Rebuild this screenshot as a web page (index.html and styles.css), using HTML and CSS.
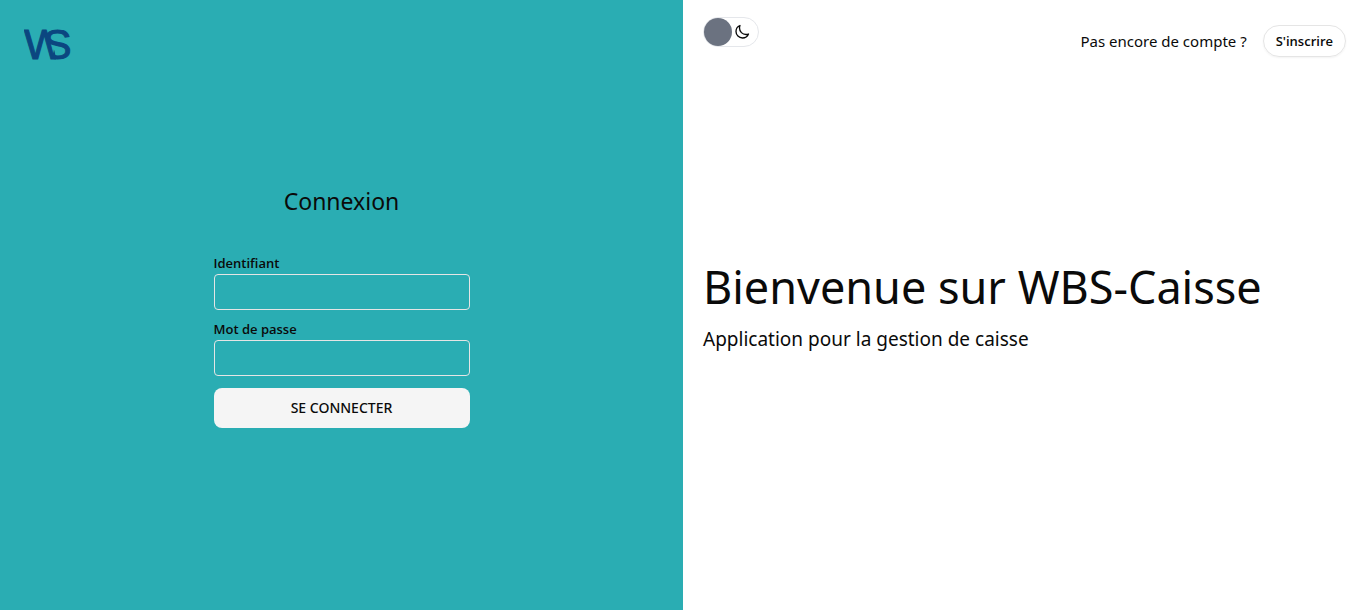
FILE: index.html
```html
<!DOCTYPE html>
<html lang="fr">
<head>
<meta charset="utf-8">
<meta name="viewport" content="width=device-width, initial-scale=1">
<title>WBS-Caisse</title>
<link rel="stylesheet" href="styles.css">
</head>
<body>
<main class="page">
  <section class="login">
    <a class="logo" href="#" aria-label="Accueil">
      <svg width="50" height="34" viewBox="0 0 50 34" aria-hidden="true">
        <clipPath id="first-strokes"><path d="M0 0H24L33 34H0Z"/></clipPath>
        <clipPath id="right-part"><path d="M20 0H50V34H30L24 14Z"/></clipPath>
        <text class="logo-letter" x="0" y="32" clip-path="url(#first-strokes)">W</text>
        <text class="logo-letter" x="19" y="32" clip-path="url(#right-part)">S</text>
      </svg>
    </a>
    <form class="form">
      <h2 class="form-title">Connexion</h2>
      <div class="field">
        <label class="label" for="user">Identifiant</label>
        <input class="input" id="user" type="text">
      </div>
      <div class="field">
        <label class="label" for="password">Mot de passe</label>
        <input class="input" id="password" type="password">
      </div>
      <button class="submit" type="submit">SE CONNECTER</button>
    </form>
  </section>
  <section class="welcome">
    <header class="topbar">
      <button class="theme" type="button" aria-label="Mode sombre">
        <span class="theme-knob"></span>
        <svg class="theme-icon" width="16" height="16" viewBox="0 0 24 24" fill="none" stroke="currentColor" stroke-width="2" stroke-linecap="round" stroke-linejoin="round" aria-hidden="true"><path d="M21.75 15A9.72 9.72 0 0 1 18 15.75C12.6 15.75 8.25 11.4 8.25 6c0-1.33.27-2.6.75-3.75A9.75 9.75 0 0 0 3 11.25C3 16.63 7.37 21 12.75 21a9.75 9.75 0 0 0 9-6Z"/></svg>
      </button>
      <div class="signup">
        <span class="signup-text">Pas encore de compte ?</span>
        <a class="signup-link" href="#">S'inscrire</a>
      </div>
    </header>
    <div class="intro">
      <h1 class="intro-title">Bienvenue sur WBS-Caisse</h1>
      <p class="intro-text">Application pour la gestion de caisse</p>
    </div>
  </section>
</main>
</body>
</html>
```
FILE: styles.css
```css
* { box-sizing: border-box; }
body {
  margin: 0;
  font-family: "Noto Sans", "Open Sans", sans-serif;
  color: #0a0a0a;
  background: #fff;
}
h1, h2, p { margin: 0; font-weight: 400; }
.page {
  display: grid;
  grid-template-columns: 1fr 1fr;
  min-height: 100vh;
}
.login {
  display: grid;
  grid-template-rows: 88px 1fr 88px;
  justify-items: center;
  align-items: center;
  background: #2aadb3;
}
.logo { justify-self: start; padding-left: 24px; line-height: 0; }
.logo-letter {
  font-family: "Liberation Sans", Arial, sans-serif;
  font-size: 43px;
  fill: #0b4680;
  stroke: #0b4680;
  stroke-width: 1px;
}
.form {
  display: flex;
  flex-direction: column;
  gap: 12px;
  width: 256px;
  padding-top: 3px;
}
.form-title {
  margin-bottom: 27px;
  font-size: 23px;
  line-height: 32px;
  text-align: center;
}
.field { display: flex; flex-direction: column; }
.label {
  padding-bottom: 4px;
  font-family: "Open Sans", sans-serif;
  font-size: 13px;
  font-weight: 600;
  line-height: 14px;
}
.input {
  height: 36px;
  padding: 4px 12px;
  border: 1px solid #e5e5e5;
  border-radius: 4px;
  background: transparent;
  font: inherit;
}
.submit {
  height: 40px;
  border: 0;
  border-radius: 8px;
  background: #f5f5f5;
  color: inherit;
  font: 500 14px/20px "Noto Sans", sans-serif;
}
.welcome {
  display: grid;
  grid-template-rows: 88px 1fr 88px;
  align-items: center;
  padding: 0 20px;
}
.topbar {
  display: flex;
  align-self: start;
  justify-content: space-between;
  align-items: flex-start;
  padding-top: 17px;
}
.theme {
  display: flex;
  align-items: center;
  gap: 2px;
  width: 56px;
  height: 30px;
  padding: 0;
  border: 1px solid #e5e7eb;
  border-radius: 15px;
  background: #fff;
  color: #0a0a0a;
}
.theme-knob { width: 28px; height: 28px; border-radius: 50%; background: #6b7280; }
.signup { display: flex; align-items: center; gap: 16px; padding-top: 8px; }
.signup-text { font-size: 15px; line-height: 24px; }
.signup-link {
  padding: 5px 12px;
  border: 1px solid #e5e5e5;
  border-radius: 16px;
  box-shadow: 0 1px 2px rgba(0, 0, 0, .05);
  color: inherit;
  font-family: "Open Sans", sans-serif;
  font-size: 13px;
  font-weight: 600;
  line-height: 20px;
  text-decoration: none;
}
.intro { padding-top: 4px; }
.intro-title { font-size: 45px; line-height: 56px; }
.intro-text { margin-top: 8px; font-size: 19px; line-height: 32px; }
```
